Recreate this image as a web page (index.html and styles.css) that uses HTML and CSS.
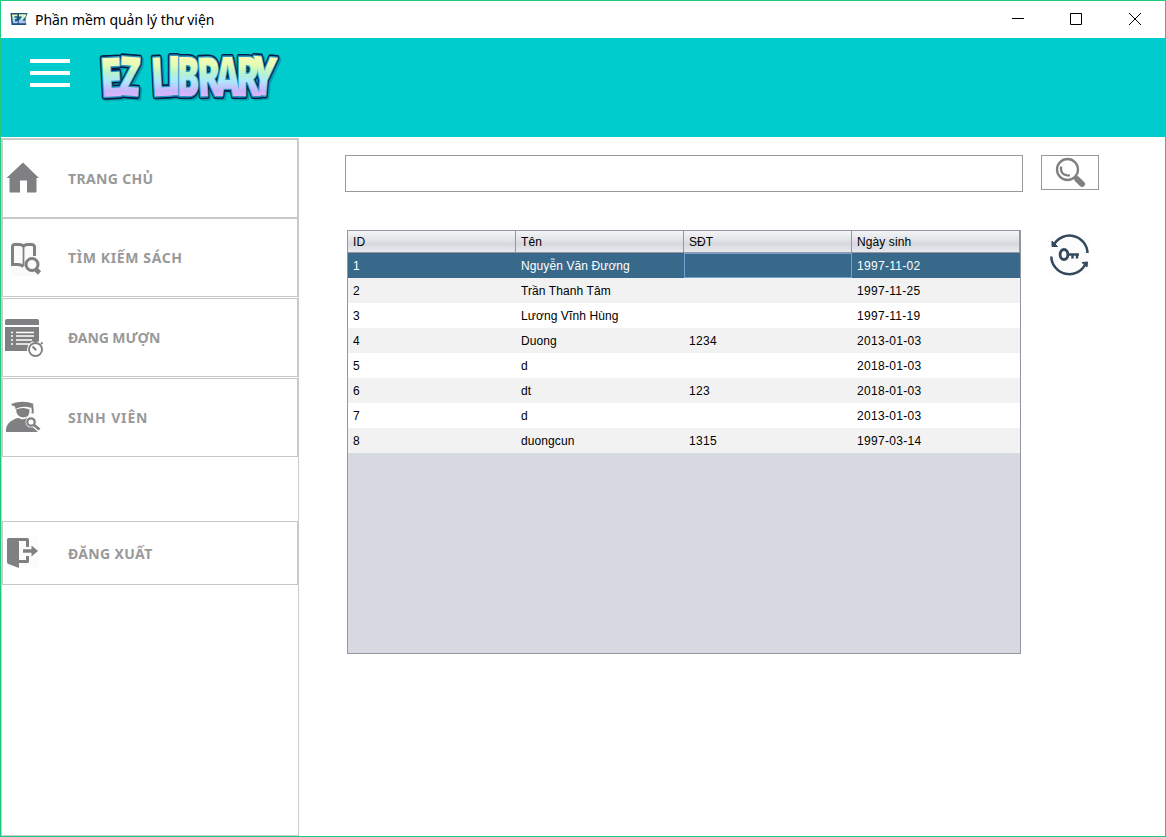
FILE: index.html
```
<!DOCTYPE html>
<html lang="vi">
<head>
<meta charset="utf-8">
<title>Phần mềm quản lý thư viện</title>
<link rel="stylesheet" href="styles.css">
</head>
<body>
<div class="window">
  <header class="titlebar">
    <svg class="app-icon" width="18" height="14" viewBox="0 0 18 14">
      <defs><linearGradient id="mini" x1="0" y1="0" x2="0" y2="1"><stop offset=".1" stop-color="#f0f7b0"/><stop offset=".55" stop-color="#a5e4f0"/><stop offset="1" stop-color="#b9b3f5"/></linearGradient></defs>
      <path d="M.5 1h17l-2 6 .8 6H1.500z" fill="#1b5580"/>
      <path d="M2 2.500h5.500l-.3 1.700H4.500v1.600h2.300L6.600 7H5v2.300h2.700v2H3zM9 2.300h7v2L12.300 8.800h3.300v2.500H8.700V9L12 4.500H9z" fill="url(#mini)"/>
    </svg>
    <span class="caption">Phần mềm quản lý thư viện</span>
    <svg class="controls" width="130" height="14" viewBox="0 0 130 14" fill="none" stroke="#000">
      <path d="M0 6.500h12"/>
      <path d="M58.500 1.500h11v11h-11z"/>
      <path d="M117 1l12 12M129 1l-12 12"/>
    </svg>
  </header>

  <div class="banner">
    <svg class="burger" width="40" height="28" viewBox="0 0 40 28" fill="#fff"><path d="M0 0h40v4H0zM0 12h40v4H0zM0 24h40v4H0z"/></svg>
    <svg class="logo" width="186" height="56" viewBox="0 0 186 56">
      <defs>
        <linearGradient id="shine" gradientUnits="userSpaceOnUse" x1="0" y1="7" x2="0" y2="49">
          <stop offset="0" stop-color="#fdfbb5"/><stop offset=".25" stop-color="#e4fbb6"/><stop offset=".42" stop-color="#b9f3cd"/><stop offset=".62" stop-color="#aee8fa"/><stop offset=".85" stop-color="#c9b5fb"/><stop offset="1" stop-color="#e0b4f8"/>
        </linearGradient>
        <g id="word">
          <text x="3" y="48.500" textLength="22" lengthAdjust="spacingAndGlyphs" transform="rotate(-3 14 28)">E</text>
          <text x="22" y="47.500" textLength="21" lengthAdjust="spacingAndGlyphs" transform="rotate(4 32 28)">Z</text>
          <text x="54" y="48" textLength="21" lengthAdjust="spacingAndGlyphs" transform="rotate(-3 64 28)">L</text>
          <text x="70" y="47" textLength="14" lengthAdjust="spacingAndGlyphs">I</text>
          <text x="79.500" y="47.500" textLength="23" lengthAdjust="spacingAndGlyphs">B</text>
          <text x="100" y="48" textLength="24" lengthAdjust="spacingAndGlyphs" transform="rotate(-3 111 28)">R</text>
          <text x="118" y="48" textLength="25" lengthAdjust="spacingAndGlyphs">A</text>
          <text x="139" y="48" textLength="24" lengthAdjust="spacingAndGlyphs">R</text>
          <text x="155" y="47.500" textLength="24" lengthAdjust="spacingAndGlyphs" transform="rotate(5 168 28)">Y</text>
        </g>
      </defs>
      <use href="#word" class="logo-shadow"/>
      <use href="#word" class="logo-edge"/>
      <use href="#word" class="logo-rim"/>
      <use href="#word" class="logo-face"/>
    </svg>
  </div>

  <div class="body">
    <nav class="sidebar">
      <a class="item">
        <svg width="46" height="46" viewBox="0 0 46 46" fill="#808082"><path d="M20 6.500L3.500 22h3V36.500h10.500V24.500h7v12h8.500q1 0 1-1V22h2.500z"/></svg>
        <span class="home">TRANG CHỦ</span>
      </a>
      <a class="item">
        <svg width="46" height="46" viewBox="0 0 46 46" fill="none" stroke="#808082" stroke-width="3">
          <path d="M8 6h29v35H8z" fill="#fafafa" stroke="none"/>
          <path d="M20.500 31.500Q18 29.500 15 29.500H9.500V12Q9.500 9.500 12 9.500h4Q20 9.500 20.500 12Q21 9.500 25 9.500h3Q31.500 9.500 31.500 12V21"/>
          <path d="M20.500 11v20" stroke-width="1.800"/>
          <circle cx="29" cy="29.500" r="6" fill="#fafafa"/><path d="M33 34.500l3.500 3.500" stroke-width="4.600"/>
        </svg>
        <span class="find">TÌM KIẾM SÁCH</span>
      </a>
      <a class="item gap">
        <svg width="46" height="46" viewBox="0 0 46 46" fill="#808082">
          <path d="M2 10V6q0-2 2-2h30q2 0 2 2v4zM2 12h34v24H2z"/>
          <path d="M8 17.500h2m3 0h18M8 21h2m3 0h18M8 25h2m3 0h16M8 29h2m3 0h13" stroke="#fff" stroke-width="1.600"/>
          <circle cx="32.500" cy="34.500" r="8.500" fill="#fff"/><circle cx="32.500" cy="34.500" r="6.500" fill="none" stroke="#808082" stroke-width="1.900"/>
          <path d="M32.500 27v-2m-2.200 1h4.400M38 29l1.600-1.600M32.500 34.500l-3-3M31.500 34.500h2" stroke="#808082" stroke-width="1.900"/>
        </svg>
        <span class="loans">ĐANG MƯỢN</span>
      </a>
      <a class="item gap">
        <svg width="46" height="46" viewBox="0 0 46 46" fill="#808082">
          <path d="M4 7h32v30H4z" fill="#fcfcfc"/>
          <path d="M8 9Q20 4.500 31 9L28.500 10.500V13Q20 10 12.500 14L12 11.500Q8.500 10.500 8 9z"/>
          <path d="M29 9.500l.8 6-.3 3" fill="none" stroke="#808082" stroke-width="2"/>
          <path d="M13 14.500Q20 11.500 26.500 14.500Q27 22.500 20 22.500Q13.500 22 13 14.500zM3 37Q2.500 30 7.500 26.500Q12 23.500 15.500 22.700Q20 26 24 22.700L31 26L35 37z"/>
          <circle cx="28" cy="27" r="5.500" fill="#fcfcfc"/><path d="M31 30l6 5.500" stroke="#fcfcfc" stroke-width="5"/>
          <circle cx="28" cy="27" r="3.700" fill="#fff" stroke="#808082" stroke-width="2.200"/><path d="M31 30l5.500 4.500" stroke="#808082" stroke-width="2.800"/>
        </svg>
        <span class="students">SINH VIÊN</span>
      </a>
      <a class="item logout">
        <svg width="46" height="46" viewBox="0 0 46 46" fill="#808082">
          <path d="M4 7h32v31H4z" fill="#fcfcfc"/>
          <path d="M4 9.500q0-1.500 1.500-1.500l10.500 3.500v26.500L5.500 34Q4 33.500 4 32z"/>
          <path d="M5 9.500h19.500V17M15.500 31.500h9V26" fill="none" stroke="#808082" stroke-width="3" stroke-linejoin="round"/>
          <path d="M20 19.200h8.500v-3.700l6.500 5.500-6.500 5.500v-3.700h-8.500z"/>
        </svg>
        <span class="exit">ĐĂNG XUẤT</span>
      </a>
    </nav>

    <main class="main">
      <div class="search-row">
        <input class="search" type="text" aria-label="Search">
        <button class="search-btn" aria-label="Find">
          <svg width="34" height="32" viewBox="0 0 34 32" fill="none" stroke="#808080">
            <circle cx="14.500" cy="12.500" r="10.500" stroke-width="2.300"/>
            <path d="M8.200 9.500Q6.500 18.500 17 18.500" stroke-width="2.200"/>
            <path d="M21.500 19.500l2.500 2.500" stroke-width="4"/><path d="M24.500 22.500l4.500 4.500" stroke-width="6" stroke-linecap="round"/>
          </svg>
        </button>
      </div>
      <div class="data-row">
        <div class="table-pane">
          <div class="row head"><span>ID</span><span>Tên</span><span>SĐT</span><span>Ngày sinh</span></div>
          <div class="row selected"><span>1</span><span>Nguyễn Văn Đương</span><span class="focus"></span><span class="num">1997-11-02</span></div>
          <div class="row alt"><span>2</span><span>Trần Thanh Tâm</span><span></span><span class="num">1997-11-25</span></div>
          <div class="row"><span>3</span><span>Lương Vĩnh Hùng</span><span></span><span class="num">1997-11-19</span></div>
          <div class="row alt"><span>4</span><span>Duong</span><span class="num">1234</span><span class="num">2013-01-03</span></div>
          <div class="row"><span>5</span><span>d</span><span></span><span class="num">2018-01-03</span></div>
          <div class="row alt"><span>6</span><span>dt</span><span class="num">123</span><span class="num">2018-01-03</span></div>
          <div class="row"><span>7</span><span>d</span><span></span><span class="num">2013-01-03</span></div>
          <div class="row alt"><span>8</span><span>duongcun</span><span class="num">1315</span><span class="num">1997-03-14</span></div>
        </div>
        <svg class="reset" width="40" height="42" viewBox="0 0 40 42" fill="none" stroke="#34495e" stroke-width="2.500">
          <path d="M0 1h39v39H0z" fill="#fcfcfc" stroke="none"/>
          <path d="M4 10.500A18 18 0 0 1 37.500 19M1.300 22.500A18 18 0 0 0 35.500 30"/>
          <path d="M2 7v5.500h5.500zM37.500 28l-5.500 .5 5 4.500z" fill="#34495e" stroke-width="1"/>
          <ellipse cx="14" cy="20.500" rx="3.900" ry="5" stroke-width="2.900"/>
          <path d="M18 20.500h11M22.500 20v4.500M27 20v4.500" stroke-width="2.500"/>
        </svg>
      </div>
    </main>
  </div>
</div>
</body>
</html>
```
FILE: styles.css
```
* { box-sizing: border-box; }
body { margin: 0; background: #fff; }

.window {
  width: 1166px;
  height: 837px;
  border: 1px solid #1fc97f;
  display: flex;
  flex-direction: column;
  overflow: hidden;
}

.titlebar {
  height: 37px;
  flex: none;
  display: flex;
  align-items: center;
  padding: 0 23px 0 9px;
}
.app-icon { margin-top: -2px; }
.caption {
  margin-left: 7px;
  font: 14px/20px "Noto Sans", sans-serif;
  letter-spacing: -.06px;
  color: #000;
  white-space: nowrap;
}
.controls { margin-left: auto; margin-top: -1px; }

.banner {
  height: 99px;
  flex: none;
  background: #00cccd;
  display: flex;
  align-items: flex-start;
}
.burger { margin: 21px 0 0 29px; }
.logo {
  margin: 10px 0 0 27px;
  font: 800 54px "Open Sans", sans-serif;
  stroke-linejoin: round;
}
.logo-shadow { fill: #078; stroke: #078; stroke-width: 5px; opacity: .5; transform: translate(2px, 2px); }
.logo-edge { fill: #061c45; stroke: #061c45; stroke-width: 6px; }
.logo-rim { fill: #2797c2; stroke: #2797c2; stroke-width: 2.8px; }
.logo-face { fill: url(#shine); }

.body { flex: 1; display: flex; padding-top: 1px; min-height: 0; }

.sidebar {
  width: 298px;
  flex: none;
  border: 1px solid #ccc;
  display: flex;
  flex-direction: column;
}
.item {
  height: 79px;
  flex: none;
  border: 1px solid #c8c8c8;
  display: flex;
  align-items: center;
  font: bold 14px/20px "Noto Sans", sans-serif;
  color: #999;
}
.item span { margin-left: 19px; padding-top: 1px; white-space: nowrap; }
.item .home, .item .exit { letter-spacing: .35px; }
.item .find { letter-spacing: .62px; }
.item .loans { letter-spacing: -.1px; }
.item .students { letter-spacing: .85px; }
.item.gap { margin-top: 1px; }
.item.logout { height: 64px; margin-top: 64px; }

.main { flex: 1; padding: 17px 0 0 46px; }
.search-row { display: flex; gap: 18px; align-items: flex-start; }
.search {
  width: 678px;
  height: 37px;
  border: 1px solid #999;
  background: #fff;
  outline: none;
}
.search-btn {
  width: 58px;
  height: 35px;
  border: 1px solid #999;
  background: #fff;
  padding: 0;
  display: flex;
  align-items: center;
  justify-content: center;
}
.data-row { display: flex; margin: 38px 0 0 2px; }
.table-pane {
  width: 674px;
  height: 424px;
  border: 1px solid #9297a1;
  background: #d6d9df;
  font: 12px/15px "Liberation Sans", Arial, sans-serif;
  letter-spacing: .1px;
  color: #000;
}
.row {
  height: 25px;
  display: grid;
  grid-template-columns: repeat(4, 168px);
  background: #fff;
}
.row span { padding: 6px 5px 4px; white-space: nowrap; }
.row .num { letter-spacing: .3px; }
.row.alt { background: #f2f2f2; }
.row.selected { background: #39698a; color: #fff; }
.row .focus { border: 1px solid #73a4d1; }
.row.head {
  height: 22px;
  background: linear-gradient(#f3f4f6 0, #e2e3e8 45%, #d5d8de 60%, #e8eaee 100%);
  border-bottom: 1px solid #9297a1;
}
.head span { border-right: 1px solid #9297a1; padding: 4px 5px 2px; }
.reset { margin: 4px 0 0 29px; }
```
